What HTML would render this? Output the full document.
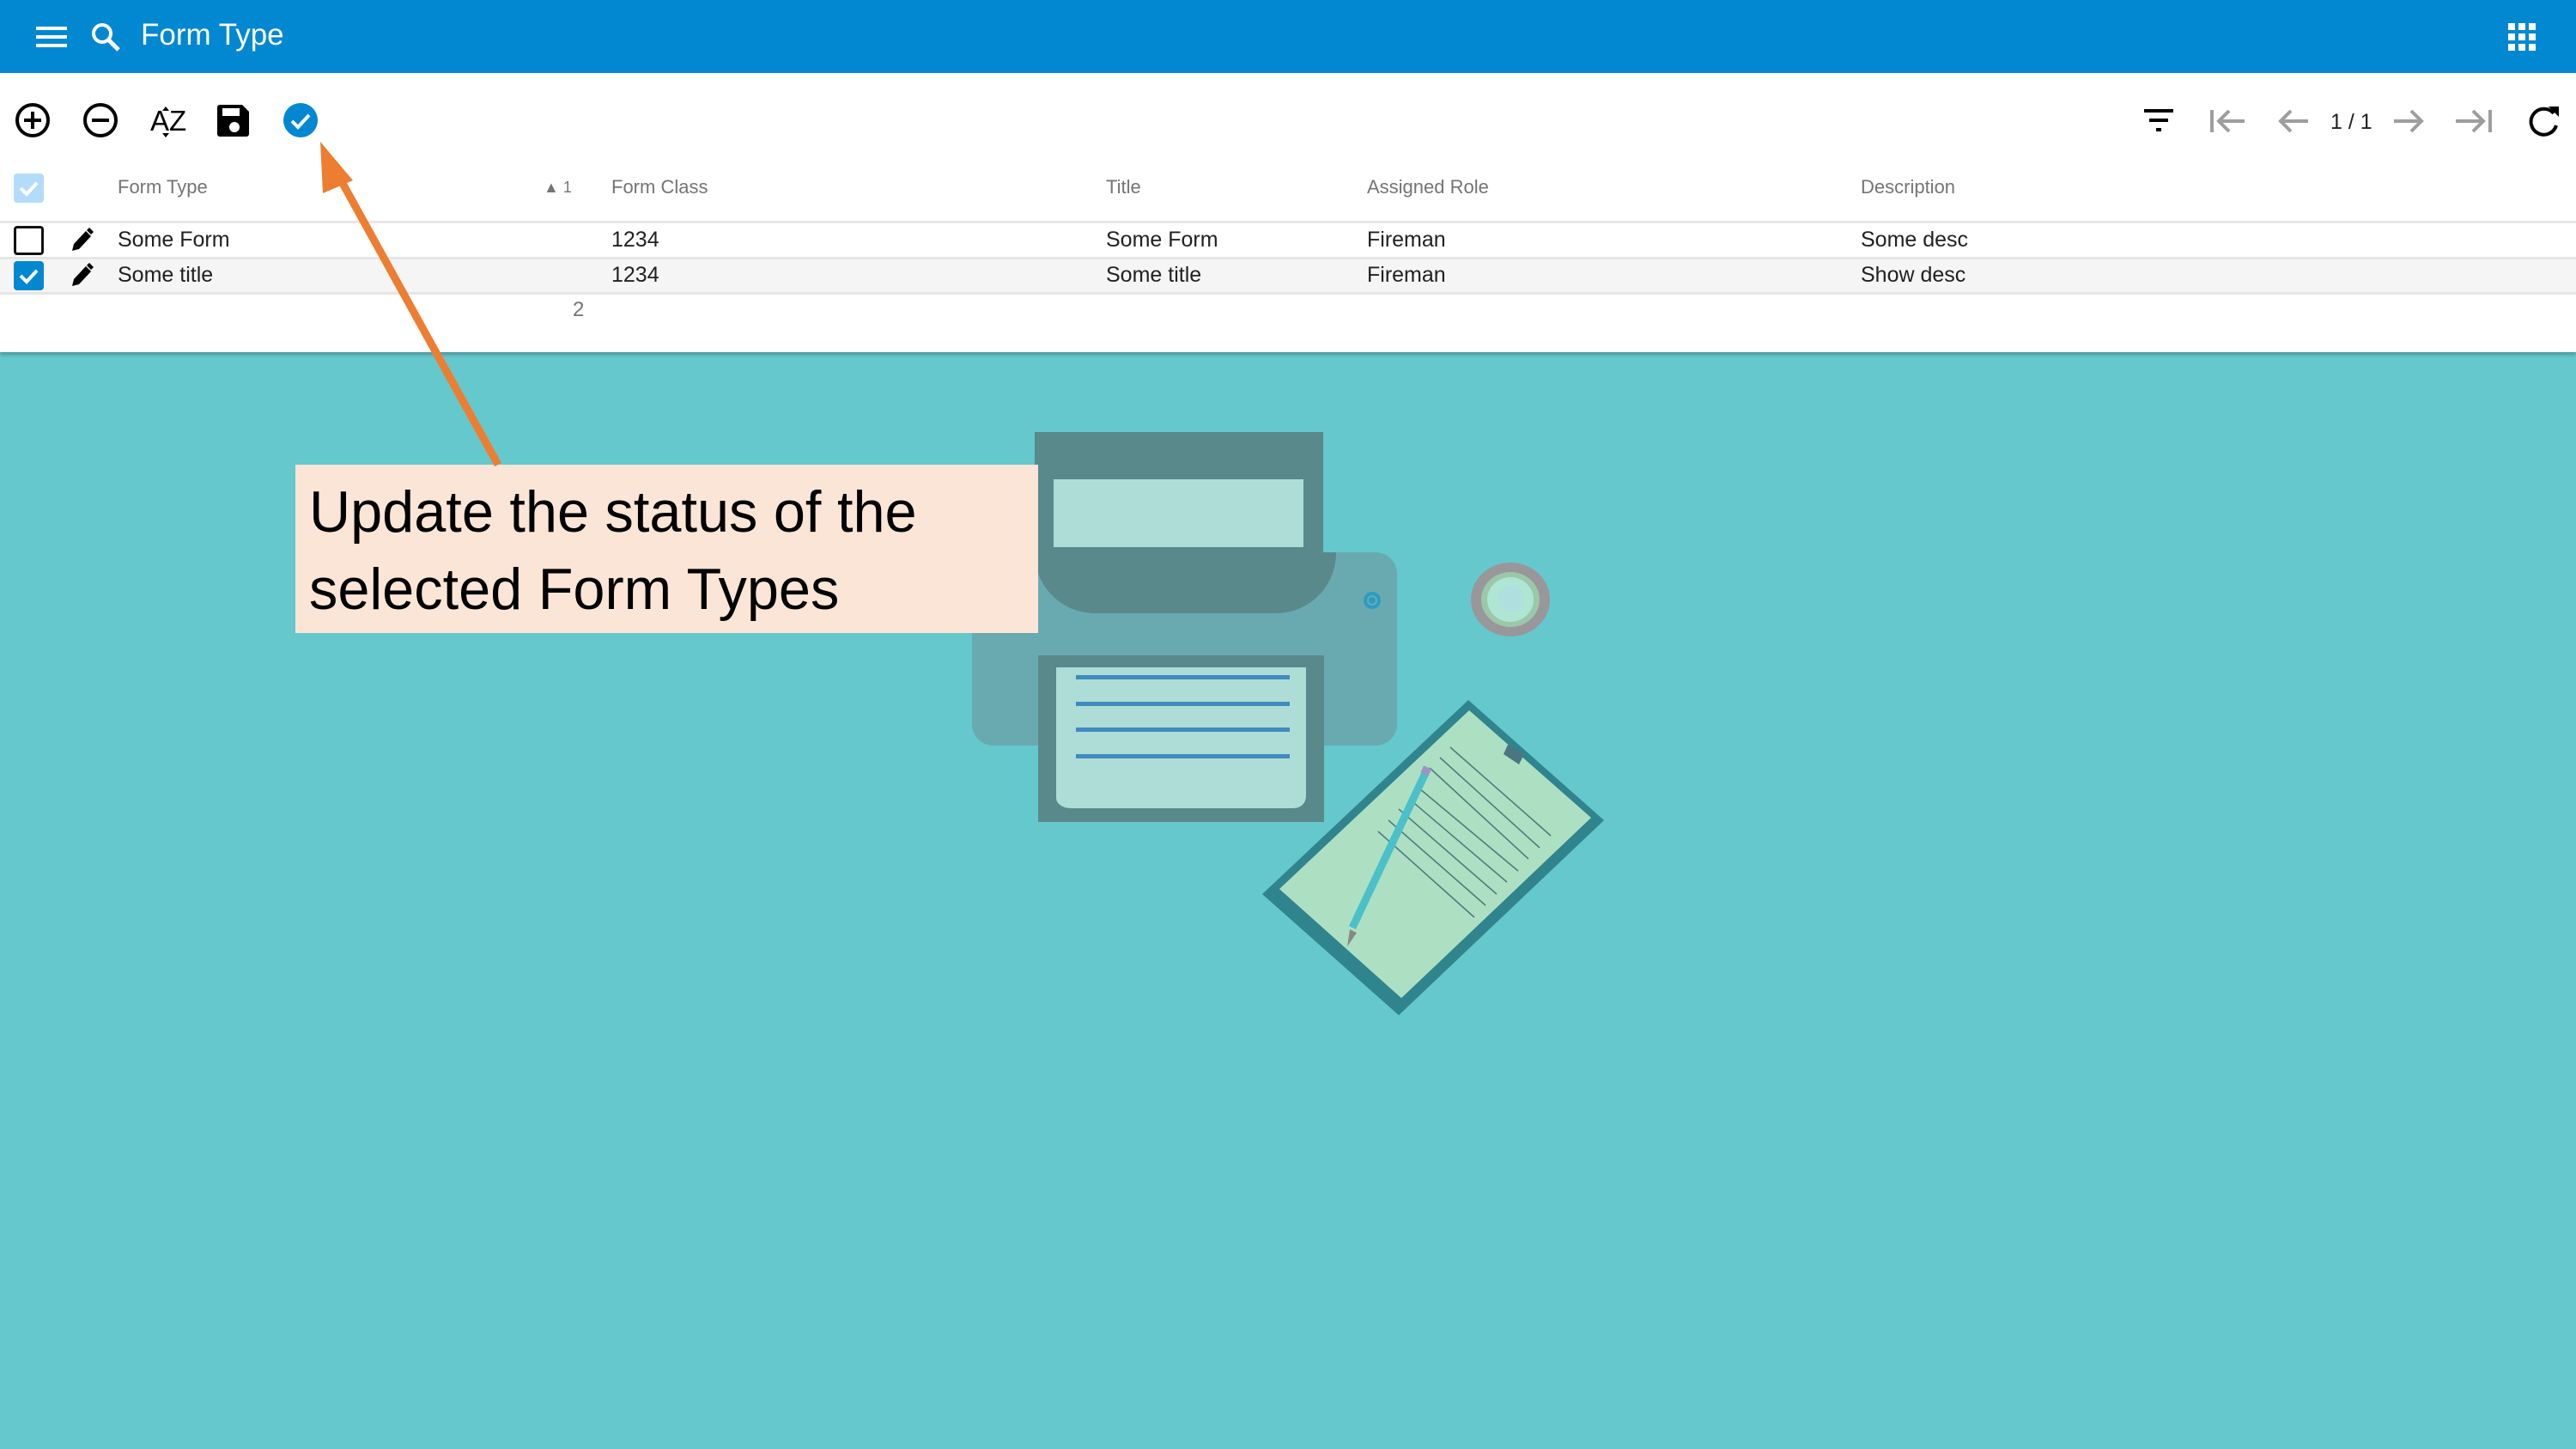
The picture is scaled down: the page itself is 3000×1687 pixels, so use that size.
<!DOCTYPE html>
<html><head><meta charset="utf-8"><style>
*{margin:0;padding:0;box-sizing:border-box}
body{width:3000px;height:1687px;overflow:hidden;background:#64c8cd;font-family:"Liberation Sans",sans-serif;position:relative}
.abs{position:absolute}
.hdr{left:0;top:0;width:3000px;height:85px;background:#0288d1}
.panel{left:0;top:85px;width:3000px;height:325px;background:#fff;box-shadow:0 3px 4px rgba(0,0,0,.25)}
.t{position:absolute;white-space:nowrap}
.h{font-size:22px;color:#757575;top:205px}
.c{font-size:25px;color:#212121}
.line{position:absolute;left:0;width:3000px;height:3px;background:#e6e6e6}
.cb{position:absolute;left:16px;width:35px;height:34px;border-radius:4px}
</style></head><body>
<div class="abs hdr"></div>
<svg class="abs" style="left:40px;top:25px" width="42" height="36" viewBox="0 0 42 36"><rect x="2" y="6" width="36" height="4" fill="#fff"/><rect x="2" y="16" width="36" height="4" fill="#fff"/><rect x="2" y="26" width="36" height="4" fill="#fff"/></svg>
<svg class="abs" style="left:104px;top:24px" width="40" height="40" viewBox="0 0 40 40"><circle cx="15" cy="15" r="10" fill="none" stroke="#fff" stroke-width="4"/><line x1="22" y1="22" x2="34" y2="34" stroke="#fff" stroke-width="5"/></svg>
<div class="t" style="left:164px;top:21px;font-size:35px;color:#fff">Form Type</div>
<svg class="abs" style="left:2920px;top:26px" width="34" height="34" viewBox="0 0 34 34" fill="#fff"><rect x="1" y="1" width="8" height="8"/><rect x="13" y="1" width="8" height="8"/><rect x="25" y="1" width="8" height="8"/><rect x="1" y="13" width="8" height="8"/><rect x="13" y="13" width="8" height="8"/><rect x="25" y="13" width="8" height="8"/><rect x="1" y="25" width="8" height="8"/><rect x="13" y="25" width="8" height="8"/><rect x="25" y="25" width="8" height="8"/></svg>
<div class="abs panel"></div>
<svg class="abs" style="left:0;top:110px" width="400" height="60" viewBox="0 110 400 60">
<circle cx="38" cy="140" r="18" fill="none" stroke="#000" stroke-width="4"/><path d="M38 130v20M28 140h20" stroke="#000" stroke-width="4"/>
<circle cx="117" cy="140" r="18" fill="none" stroke="#000" stroke-width="4"/><path d="M107 140h20" stroke="#000" stroke-width="4"/>
<text x="175" y="152" font-size="33" font-family="Liberation Sans" fill="#000">AZ</text><path d="M193 124l-4 5h8zM193 160l-4-5h8z" fill="#000"/>
<path d="M256 122h26l8 8v26a3 3 0 0 1-3 3h-31a3 3 0 0 1-3-3v-31a3 3 0 0 1 3-3z" fill="#000"/><rect x="259" y="126" width="20" height="9" fill="#fff"/><circle cx="273" cy="148" r="6" fill="#fff"/>
<circle cx="350" cy="140" r="20" fill="#0288d1"/><path d="M340 141l7 7 13-14" fill="none" stroke="#fff" stroke-width="4"/>
</svg>
<svg class="abs" style="left:2480px;top:110px" width="520" height="60" viewBox="2480 110 520 60">
<path d="M2497 129h34M2503 140h22M2511 151h6" stroke="#000" stroke-width="4"/>
<g stroke="#9e9e9e" stroke-width="4" fill="none"><path d="M2576 128v26M2584 141h30M2596 129l-12 12 12 12"/><path d="M2656 141h32M2668 129l-12 12 12 12"/><path d="M2788 141h32M2808 129l12 12-12 12"/><path d="M2860 141h32M2880 129l12 12-12 12M2900 128v26"/></g>
<text x="2714" y="150" font-size="25" font-family="Liberation Sans" fill="#212121">1 / 1</text>
<path d="M2974 132a15 15 0 1 0 3 14" fill="none" stroke="#000" stroke-width="4"/><path d="M2968 124h12v12z" fill="#000"/>
</svg>
<div class="cb" style="top:202px;background:#b3dcfb"></div>
<svg class="abs" style="left:16px;top:202px" width="35" height="34"><path d="M8 17l7 7 12-13" fill="none" stroke="#fff" stroke-width="4"/></svg>
<div class="t h" style="left:137px">Form Type</div>
<div class="t h" style="left:633px;font-size:18px;top:208px">▲ 1</div>
<div class="t h" style="left:712px">Form Class</div>
<div class="t h" style="left:1288px">Title</div>
<div class="t h" style="left:1592px">Assigned Role</div>
<div class="t h" style="left:2167px">Description</div>
<div class="line" style="top:257px"></div>
<div class="abs" style="left:0;top:300px;width:3000px;height:41px;background:#f5f5f5"></div>
<div class="line" style="top:299px"></div>
<div class="line" style="top:340px"></div>
<div class="cb" style="top:263px;border:3px solid #111;background:#fff"></div>
<div class="cb" style="top:304px;background:#0288d1"></div>
<svg class="abs" style="left:16px;top:304px" width="35" height="34"><path d="M8 17l7 7 12-13" fill="none" stroke="#fff" stroke-width="4"/></svg>
<svg class="abs" style="left:80px;top:264px" width="30" height="32" viewBox="0 0 30 32"><path d="M4 28l2-8 14-15 6 6-14 15z" fill="#000"/><path d="M21 4l3-3 5 5-3 3z" fill="#000"/></svg>
<svg class="abs" style="left:80px;top:305px" width="30" height="32" viewBox="0 0 30 32"><path d="M4 28l2-8 14-15 6 6-14 15z" fill="#000"/><path d="M21 4l3-3 5 5-3 3z" fill="#000"/></svg>
<div class="t c" style="left:137px;top:265px">Some Form</div>
<div class="t c" style="left:712px;top:265px">1234</div>
<div class="t c" style="left:1288px;top:265px">Some Form</div>
<div class="t c" style="left:1592px;top:265px">Fireman</div>
<div class="t c" style="left:2167px;top:265px">Some desc</div>
<div class="t c" style="left:137px;top:306px">Some title</div>
<div class="t c" style="left:712px;top:306px">1234</div>
<div class="t c" style="left:1288px;top:306px">Some title</div>
<div class="t c" style="left:1592px;top:306px">Fireman</div>
<div class="t c" style="left:2167px;top:306px">Show desc</div>
<div class="t" style="left:667px;top:347px;font-size:24px;color:#757575">2</div>
<svg class="abs" style="left:0;top:0" width="3000" height="1687" viewBox="0 0 3000 1687">
<rect x="1132" y="643" width="495" height="225" rx="25" fill="#69aab0"/>
<rect x="1205" y="503" width="336" height="140" fill="#5a898c"/>
<path d="M1205 643h351a70 70 0 0 1-70 71h-211a70 70 0 0 1-70-71z" fill="#5a898c"/>
<rect x="1227" y="558" width="291" height="79" fill="#aedcd6"/>
<circle cx="1598" cy="699" r="10" fill="#2a9dc0"/><circle cx="1598" cy="699" r="5" fill="none" stroke="#69aab0" stroke-width="2"/>
<rect x="1209" y="763" width="333" height="194" fill="#5a898c"/>
<path d="M1230 777h291v150a14 14 0 0 1-14 14h-260a17 12 0 0 1-17-12z" fill="#aedcd6"/>
<g fill="#3f8bbf"><rect x="1253" y="786" width="249" height="5"/><rect x="1253" y="817" width="249" height="5"/><rect x="1253" y="847" width="249" height="5"/><rect x="1253" y="878" width="249" height="5"/></g>
<ellipse cx="1759" cy="698" rx="46" ry="43" fill="#999799"/>
<ellipse cx="1759" cy="698" rx="34" ry="32" fill="#9bc8a9"/>
<ellipse cx="1759" cy="698" rx="27" ry="26" fill="#aee6d3"/>
<ellipse cx="1760" cy="697" rx="15" ry="15" fill="#afdfde"/>
<polygon points="1710,815 1868,955 1629,1182 1470,1041" fill="#30848d"/>
<polygon points="1711,827 1853,952 1632,1162 1490,1035" fill="#ade0c3"/>
<g stroke="#4d7c7a" stroke-width="1.6"><line x1="1689" y1="870" x2="1806" y2="973"/><line x1="1677" y1="882" x2="1793" y2="987"/><line x1="1665" y1="894" x2="1780" y2="1000"/><line x1="1653" y1="918" x2="1768" y2="1014"/><line x1="1641" y1="930" x2="1755" y2="1027"/><line x1="1629" y1="942" x2="1743" y2="1041"/><line x1="1617" y1="955" x2="1730" y2="1054"/><line x1="1605" y1="968" x2="1717" y2="1068"/></g>
<polygon points="1756,867 1775,878 1769,890 1751,878" fill="#4b7680"/>
<line x1="1660" y1="900" x2="1575" y2="1080" stroke="#4cc0c8" stroke-width="9"/>
<polygon points="1572,1082 1580,1086 1569,1102" fill="#888"/>
<rect x="1656" y="893" width="10" height="9" fill="#9a95c5" transform="rotate(25 1661 897)"/>
</svg>
<div class="abs" style="left:344px;top:541px;width:865px;height:196px;background:#fbe5d6"></div>
<div class="t" style="left:360px;top:551px;font-size:68px;line-height:90px;color:#000;transform:scaleX(0.98);transform-origin:0 0">Update the status of the<br>selected Form Types</div>
<svg class="abs" style="left:0;top:0" width="1000" height="600" viewBox="0 0 1000 600">
<line x1="580" y1="541" x2="396" y2="208" stroke="#ed7d31" stroke-width="9"/>
<polygon points="373,165 411,210 376,225" fill="#ed7d31"/>
</svg>
</body></html>
